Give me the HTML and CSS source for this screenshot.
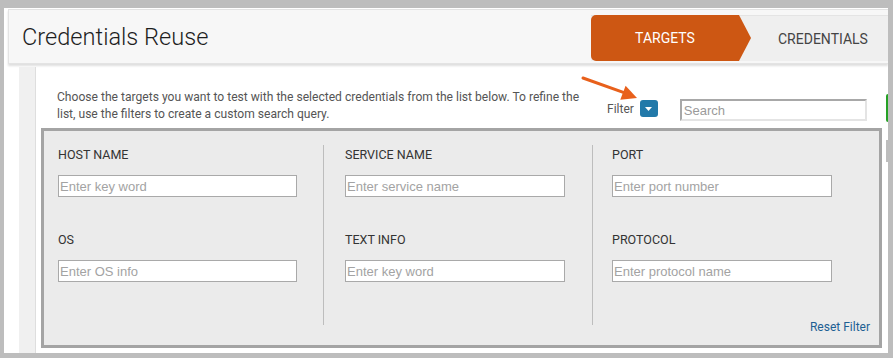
FILE: index.html
```html
<!DOCTYPE html>
<html>

<head>
    <title>Credentials Reuse</title>
    <link rel="stylesheet" href="styles.css">
</head>

<body>
    <div class="frame">
        <div class="page">
            <div class="page-header">
                <h1>Credentials Reuse</h1>
                <div class="steps">
                    <div class="step active">TARGETS</div>
                    <div class="step">CREDENTIALS</div>
                </div>
            </div>

            <div class="page-body">
                <div class="side-strip"></div>
                <div class="content">
                    <div class="toolbar">
                        <p class="intro">Choose the targets you want to test with the selected credentials from the list below. To refine the list, use the filters to create a custom search query.</p>
                        <div class="filter-toggle">
                            <span>Filter</span>
                            <button type="button" class="caret-btn">
                                <svg width="7" height="4" viewBox="0 0 7 4"><path d="M0 0H7L3.5 4Z" fill="#fff"/></svg>
                            </button>
                            <svg class="callout" width="60" height="28" viewBox="0 0 60 28">
                                <line x1="2" y1="2" x2="43" y2="16.6" stroke="#e8601b" stroke-width="3" stroke-linecap="round"/>
                                <path d="M56 22L39.3 23.8L44.6 9.8Z" fill="#e8601b"/>
                            </svg>
                        </div>
                        <input type="text" class="search" placeholder="Search">
                        <span class="green-edge"></span>
                    </div>

                    <div class="filter-panel">
                        <div class="filter-cols">
                            <div class="filter-col col-host">
                                <div class="field">
                                    <label>HOST NAME</label>
                                    <input type="text" class="wide" placeholder="Enter key word">
                                </div>
                                <div class="field">
                                    <label>OS</label>
                                    <input type="text" class="wide" placeholder="Enter OS info">
                                </div>
                            </div>
                            <div class="filter-col col-service">
                                <div class="field">
                                    <label>SERVICE NAME</label>
                                    <input type="text" placeholder="Enter service name">
                                </div>
                                <div class="field">
                                    <label>TEXT INFO</label>
                                    <input type="text" placeholder="Enter key word">
                                </div>
                            </div>
                            <div class="filter-col col-port">
                                <div class="field">
                                    <label>PORT</label>
                                    <input type="text" placeholder="Enter port number">
                                </div>
                                <div class="field">
                                    <label>PROTOCOL</label>
                                    <input type="text" placeholder="Enter protocol name">
                                </div>
                            </div>
                        </div>
                        <div class="filter-actions">
                            <a href="#">Reset Filter</a>
                        </div>
                    </div>
                </div>
                <span class="scroll-edge"></span>
            </div>
        </div>
    </div>
</body>

</html>
```

FILE: styles.css
```css
body {
    margin: 0;
    background-color: #bdbdbd;
    font-family: Roboto, "Liberation Sans", Arial, sans-serif;
}

.frame {
    padding: 8px 5px 5px 4px;
    height: 358px;
    box-sizing: border-box;
}

.page {
    background-color: #fff;
    height: 345px;
    overflow: hidden;
}

/* header with title and wizard steps */
.page-header {
    display: flex;
    align-items: flex-start;
    height: 55px;
    box-sizing: border-box;
    margin: 1px 0 0 4px;
    background-color: #f7f7f7;
    border: 1px solid #e3e3e3;
    border-right: none;
    box-shadow: 0 2px 2px rgba(0, 0, 0, 0.13);
    position: relative;
}

.page-header h1 {
    margin: 13px 0 0 13px;
    font-size: 23.6px;
    line-height: 28px;
    font-weight: 300;
    color: #1e1e1e;
}

.steps {
    display: flex;
    margin: 5px 0 0 auto;
    width: 297px;
    height: 46px;
    background-color: #efefef;
    border-top: 1px solid #e4e4e4;
    box-sizing: border-box;
}

.step {
    display: flex;
    align-items: center;
    font-size: 14px;
    color: #444;
}

.step.active {
    position: relative;
    justify-content: center;
    width: 148px;
    margin-top: -1px;
    height: 46px;
    background-color: #cd5713;
    color: #fff;
    border-radius: 5px 0 0 5px;
}

.step.active::after {
    content: "";
    position: absolute;
    left: 100%;
    top: 0;
    border-left: 12px solid #cd5713;
    border-top: 23px solid transparent;
    border-bottom: 23px solid transparent;
}

.step + .step {
    padding-left: 39px;
}

/* page body */
.page-body {
    display: flex;
    height: 289px;
    position: relative;
}

.side-strip {
    width: 16px;
    margin: 3px 0 0 15px;
    background-color: #f0f0f0;
    border-right: 1px solid #dedede;
}

.content {
    margin-left: 5px;
    width: 841px;
}

.toolbar {
    display: flex;
    align-items: flex-start;
    height: 64px;
}

.toolbar > * {
    flex-shrink: 0;
}

.intro {
    margin: 25px 0 0 16px;
    width: 535px;
    font-size: 12.1px;
    line-height: 17px;
    color: #555;
}

.filter-toggle {
    display: flex;
    align-items: center;
    position: relative;
    margin: 36px 0 0 15px;
    font-size: 12px;
    color: #555;
}

.caret-btn {
    display: flex;
    align-items: center;
    justify-content: center;
    width: 18px;
    height: 17px;
    margin-left: 6px;
    padding: 0;
    border: none;
    border-radius: 3px;
    background-color: #2279a9;
}

.callout {
    position: absolute;
    left: -26px;
    top: -24px;
}

.search {
    width: 187px;
    height: 22px;
    box-sizing: border-box;
    margin: 35px 0 0 22px;
    padding: 0 2px;
    border: 2px solid;
    border-color: #a8a8a8 #e4e4e4 #e4e4e4 #a8a8a8;
    font-family: "Liberation Sans", Arial, sans-serif;
    font-size: 13px;
}

.search::placeholder {
    color: #9a9a9a;
}

.green-edge {
    width: 3px;
    height: 28px;
    margin: 30px 0 0 19px;
    background-color: #25a125;
    border-radius: 2px 0 0 2px;
}

.scroll-edge {
    position: absolute;
    right: 0;
    top: 76px;
    width: 2px;
    height: 22px;
    background-color: #bdbdbd;
}

/* filter panel */
.filter-panel {
    height: 220px;
    box-sizing: border-box;
    border: 3px solid #a4a4a4;
    background-color: #ebebeb;
}

.filter-cols {
    display: grid;
    grid-template-columns: 280px 269px 1fr;
    margin-top: 14px;
    height: 180px;
}

.filter-col {
    padding-top: 2px;
}

.col-host {
    padding-left: 14px;
    border-right: 1px solid #bdbdbd;
}

.col-service {
    padding-left: 21px;
    border-right: 1px solid #bdbdbd;
}

.col-port {
    padding-left: 19px;
}

.field {
    height: 85px;
}

.field label {
    display: block;
    font-size: 12.5px;
    line-height: 15px;
    color: #333;
    margin-bottom: 13px;
}

.field input {
    display: block;
    width: 220px;
    height: 22px;
    box-sizing: border-box;
    padding: 0 1px;
    border: 1px solid #a9a9a9;
    background-color: #fff;
    font-family: "Liberation Sans", Arial, sans-serif;
    font-size: 13px;
}

.field input.wide {
    width: 239px;
}

.field input::placeholder {
    color: #a3a3a3;
}

.filter-actions {
    margin-top: -5px;
    padding-right: 9px;
    text-align: right;
    font-size: 12px;
    line-height: 14px;
}

.filter-actions a {
    color: #1e5f93;
    text-decoration: none;
}
```
